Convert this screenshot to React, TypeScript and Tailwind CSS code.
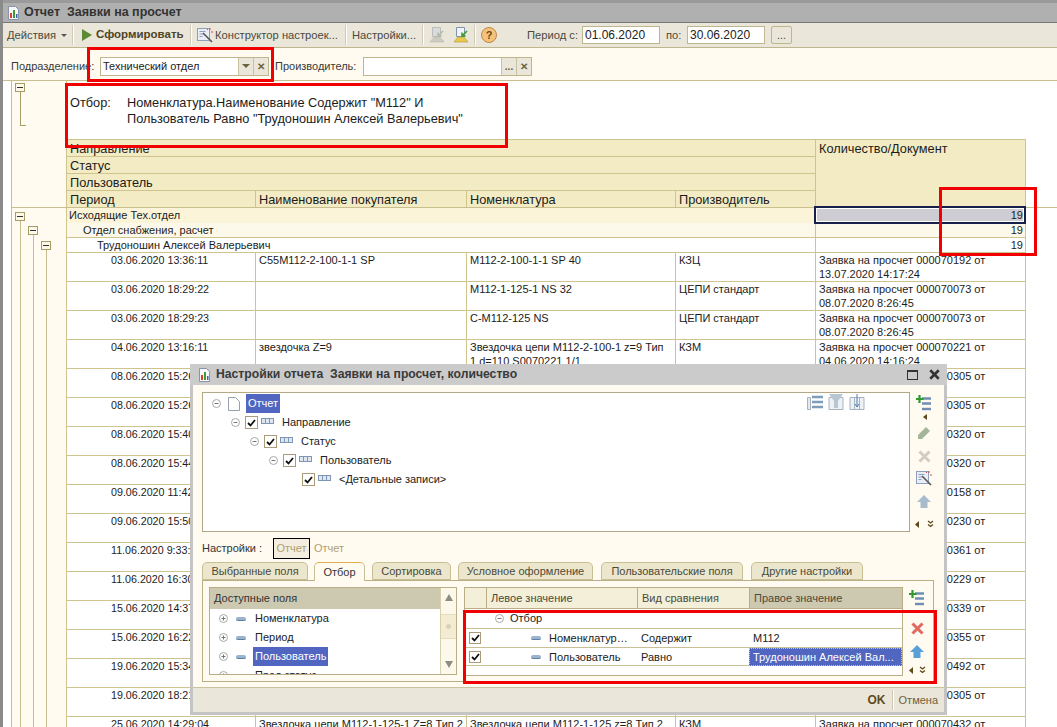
import { FC, ReactNode } from "react";

const rows: string[][] = [
  ["03.06.2020 13:36:11", "С55М112-2-100-1-1 SP", "М112-2-100-1-1 SP 40", "КЗЦ", "Заявка на просчет 000070192 от 13.07.2020 14:17:24"],
  ["03.06.2020 18:29:22", "", "М112-1-125-1 NS 32", "ЦЕПИ стандарт", "Заявка на просчет 000070073 от 08.07.2020 8:26:45"],
  ["03.06.2020 18:29:23", "", "С-М112-125 NS", "ЦЕПИ стандарт", "Заявка на просчет 000070073 от 08.07.2020 8:26:45"],
  ["04.06.2020 13:16:11", "звездочка Z=9", "Звездочка цепи М112-2-100-1 z=9 Тип 1 d=110 S0070221 1/1", "КЗМ", "Заявка на просчет 000070221 от 04.06.2020 14:16:24"],
  ["08.06.2020 15:26:10", "", "", "", "Заявка на просчет 000070305 от"],
  ["08.06.2020 15:26:44", "", "", "", "Заявка на просчет 000070305 от"],
  ["08.06.2020 15:40:12", "", "", "", "Заявка на просчет 000070320 от"],
  ["08.06.2020 15:44:31", "", "", "", "Заявка на просчет 000070320 от"],
  ["09.06.2020 11:42:05", "", "", "", "Заявка на просчет 000070158 от"],
  ["09.06.2020 15:50:18", "", "", "", "Заявка на просчет 000070230 от"],
  ["11.06.2020 9:33:27", "", "", "", "Заявка на просчет 000070361 от"],
  ["11.06.2020 16:30:41", "", "", "", "Заявка на просчет 000070229 от"],
  ["15.06.2020 14:37:09", "", "", "", "Заявка на просчет 000070339 от"],
  ["15.06.2020 16:22:50", "", "", "", "Заявка на просчет 000070355 от"],
  ["19.06.2020 15:34:16", "", "", "", "Заявка на просчет 000070492 от"],
  ["19.06.2020 18:21:38", "", "", "", "Заявка на просчет 000070305 от"],
  ["25.06.2020 14:29:04", "Звездочка цепи М112-1-125-1 Z=8 Тип 2", "Звездочка цепи М112-1-125 z=8 Тип 2", "КЗМ", "Заявка на просчет 000070432 от"],
];

const ReportIcon: FC = () => (
  <svg width="13" height="14" viewBox="0 0 13 14" className="shrink-0">
    <path d="M1.5 .5h7l3 3v10h-10z" fill="#f7f7fa" stroke="#8b93a8" />
    <rect x="3" y="7" width="2" height="5" fill="#d8402a" />
    <rect x="6" y="4" width="2" height="8" fill="#3f9a3a" />
    <rect x="9" y="8" width="1.5" height="4" fill="#3b62b5" />
  </svg>
);

const PlayIcon: FC = () => (
  <svg width="10" height="12" viewBox="0 0 10 12" className="shrink-0">
    <path d="M0 0l10 6-10 6z" fill="#5d8a35" />
  </svg>
);

const WandIcon: FC = () => (
  <svg width="16" height="16" viewBox="0 0 16 16" className="shrink-0">
    <rect x=".5" y="1.5" width="12" height="12" fill="#e8edf6" stroke="#8fa0bd" />
    <path d="M2.500 4.500h6M2.500 7h4M2.500 9.500h3" stroke="#8fa0bd" />
    <path d="M6 6l9 9" stroke="#555" strokeWidth="1.6" />
    <path d="M10 2l1 1M13 1v2M14 5h2" stroke="#d64a4a" />
  </svg>
);

const SaveIcon: FC<{ muted?: boolean }> = ({ muted }) => (
  <svg width="16" height="16" viewBox="0 0 16 16" className="shrink-0" opacity={muted ? 0.55 : 1}>
    <path d="M3.500 .5h8v9h-8z" fill={muted ? "#cfd3d6" : "#f0f3f7"} stroke={muted ? "#8f9aa3" : "#7f93ad"} />
    <path d="M1 15l4-5h6l4 5z" fill={muted ? "#b6b6ae" : "#e8c94e"} stroke={muted ? "#96968c" : "#b0953a"} strokeWidth=".6" />
    <path d="M14 4l-5 5M9 5.500V9h3.500" stroke={muted ? "#7f9c88" : "#3f9a3a"} strokeWidth="1.6" fill="none" />
  </svg>
);

const HelpIcon: FC = () => (
  <div className="flex h-[16px] w-[16px] shrink-0 items-center justify-center rounded-full border border-[#b98a45] bg-[#f4c27c] text-[11px] font-bold leading-none text-[#6d4a18]">
    ?
  </div>
);

const ToggleBox: FC = () => (
  <div className="flex h-[9px] w-[10px] shrink-0 items-center justify-center border border-[#a89c66] bg-[#fdf9ea]">
    <div className="h-px w-[6px] bg-[#333]" />
  </div>
);

const Circle: FC<{ plus?: boolean }> = ({ plus }) => (
  <svg width="9" height="9" viewBox="0 0 9 9" className="shrink-0">
    <circle cx="4.5" cy="4.5" r="4" fill="#fff" stroke="#a8a8a8" />
    <path d={plus ? "M2.500 4.500h4M4.500 2.500v4" : "M2.500 4.500h4"} stroke="#777" />
  </svg>
);

const Check: FC<{ small?: boolean }> = ({ small }) => (
  <div className={`flex shrink-0 items-center justify-center border border-[#a89d78] bg-white ${small ? "h-[12px] w-[12px]" : "h-[13px] w-[13px]"}`}>
    <svg width="9" height="8" viewBox="0 0 9 8">
      <path d="M1 4l2.500 2.500L8 1" stroke="#111" strokeWidth="1.8" fill="none" />
    </svg>
  </div>
);

const GroupIcon: FC = () => (
  <svg width="13" height="6" viewBox="0 0 13 6" className="shrink-0">
    <rect x=".5" y=".5" width="12" height="5" fill="#dfe6ef" stroke="#7f97b5" />
    <path d="M4.500 .5v5M8.500 .5v5" stroke="#7f97b5" />
  </svg>
);

const FieldIcon: FC = () => <div className="h-[4px] w-[10px] shrink-0 rounded-[2px] border-b border-[#5c7fa5] bg-[#9ab4d0]" />;

const AddIcon: FC = () => (
  <svg width="16" height="16" viewBox="0 0 16 16">
    <path d="M6 3.500h9M6 8.500h9" stroke="#6d8fb3" strokeWidth="2.400" />
    <path d="M6 14h9" stroke="#6d8fb3" strokeWidth="2.400" />
    <path d="M3.500 0v8M0 4h7.500" stroke="#2f9a2f" strokeWidth="2.200" />
  </svg>
);

const PencilIcon: FC = () => (
  <svg width="13" height="13" viewBox="0 0 13 13">
    <path d="M0 13V9l8-8 4 4-8 8z" fill="#a3b59b" />
  </svg>
);

const CrossIcon: FC<{ color: string; size?: number }> = ({ color, size = 13 }) => (
  <svg width={size} height={size} viewBox="0 0 13 13">
    <path d="M1.500 1.500l10 10M11.500 1.500l-10 10" stroke={color} strokeWidth="3" />
  </svg>
);

const UpIcon: FC<{ color: string }> = ({ color }) => (
  <svg width="14" height="13" viewBox="0 0 14 13">
    <path d="M7 0l7 7h-3.500v6h-7V7H0z" fill={color} />
  </svg>
);

const MoveArrows: FC<{ gap: string }> = ({ gap }) => (
  <div className={`flex items-center ${gap}`}>
    <svg width="4" height="7" viewBox="0 0 4 7">
      <path d="M4 0v7L0 3.500z" fill="#5d4a1a" />
    </svg>
    <svg width="7" height="8" viewBox="0 0 7 8">
      <path d="M1 1l2.500 2L6 1M1 4.500l2.500 2 2.500-2" stroke="#5d4a1a" strokeWidth="1.3" fill="none" />
    </svg>
  </div>
);

const Sep: FC<{ className?: string }> = ({ className }) => (
  <div className={`h-[20px] w-[2px] shrink-0 border-x border-l-[#cfc9b8] border-r-white ${className ?? ""}`} />
);

const Toolbar: FC = () => (
  <div className="flex h-[25px] items-center whitespace-nowrap border-b border-[#bdb68f] bg-[#ebe6da] text-[11.2px] text-[#4a4a3a]">
    <span className="ml-[4px] w-[50px]">Действия</span>
    <span className="ml-[4px] border-x-[3px] border-t-[3px] border-x-transparent border-t-[#555]" />
    <Sep className="ml-[5px]" />
    <div className="ml-[8px]"><PlayIcon /></div>
    <span className="ml-[4px] w-[88px] text-[11.5px] font-bold text-[#4f4526]">Сформировать</span>
    <Sep className="ml-[6px]" />
    <div className="ml-[5px]"><WandIcon /></div>
    <span className="ml-[2px] w-[123px]">Конструктор настроек...</span>
    <Sep className="ml-[7px]" />
    <span className="ml-[5px] w-[64px]">Настройки...</span>
    <Sep className="ml-[6px]" />
    <div className="ml-[5px]"><SaveIcon muted /></div>
    <div className="ml-[8px]"><SaveIcon /></div>
    <Sep className="ml-[5px]" />
    <div className="ml-[5px]"><HelpIcon /></div>
    <span className="ml-[30px] w-[50px]">Период с:</span>
    <div className="ml-[5px] flex h-[18px] w-[78px] items-center border border-[#bdb68f] bg-white pl-[2px] text-[12px] text-[#222]">01.06.2020</div>
    <span className="ml-[6px] w-[16px]">по:</span>
    <div className="ml-[5px] flex h-[18px] w-[78px] items-center border border-[#bdb68f] bg-white pl-[2px] text-[12px] text-[#222]">30.06.2020</div>
    <div className="ml-[6px] flex h-[18px] w-[21px] items-center justify-center rounded-[2px] border border-[#bdb68f] text-[11px]">...</div>
  </div>
);

const InputButton: FC<{ children: ReactNode }> = ({ children }) => (
  <div className="flex h-full w-[15px] items-center justify-center border-l border-[#c9c2a0] bg-[#ebe6da] text-[10px] font-bold text-[#6d6240]">
    {children}
  </div>
);

const FilterBar: FC = () => (
  <div className="flex h-[33px] items-center border-b border-[#c9bf8e] bg-[#fffbf0] pt-[4px] text-[11px] text-[#3a3a3a]">
    <span className="ml-[8px] w-[89px]">Подразделение:</span>
    <div className="flex h-[19px] w-[169px] items-center border border-[#bdb68f] bg-white">
      <span className="flex-1 pl-[2px] text-[#222]">Технический отдел</span>
      <InputButton>
        <span className="border-x-[4px] border-t-[4px] border-x-transparent border-t-[#6d6240]" />
      </InputButton>
      <InputButton>✕</InputButton>
    </div>
    <span className="ml-[6px] w-[88px]">Производитель:</span>
    <div className="flex h-[19px] w-[169px] items-center border border-[#bdb68f] bg-white">
      <span className="flex-1" />
      <InputButton>...</InputButton>
      <InputButton>✕</InputButton>
    </div>
  </div>
);

const HeaderCell: FC<{ children: ReactNode; className?: string }> = ({ children, className }) => (
  <div className={`overflow-hidden border-l border-t border-[#cfc48d] bg-[#f3ebc3] px-[3px] text-[12.75px] leading-[18px] text-[#1c1c1c] ${className ?? ""}`}>
    {children}
  </div>
);

const ReportHeader: FC = () => (
  <div className="ml-[8px] flex h-[127px] border-b border-[#c9bf8e]">
    <div className="w-[55px] border-l border-[#c9bf8e] bg-[#fffbf0] pl-[3px] pt-[2px]">
      <ToggleBox />
      <div className="ml-[5px] h-[34px] w-[6px] border-b border-l border-[#a89c66]" />
    </div>
    <div className="flex flex-col">
      <div className="flex h-[58px] border-l border-[#c9bf8e] bg-white pl-[3px] pt-[14px] text-[12.75px] leading-[16px] text-[#1c1c1c]">
        <span className="w-[57px]">Отбор:</span>
        <div>
          <div>Номенклатура.Наименование Содержит "М112" И</div>
          <div>Пользователь Равно "Трудоношин Алексей Валерьевич"</div>
        </div>
      </div>
      <div className="grid grid-cols-[189px_211px_209px_140px_211px] grid-rows-[17px_17px_17px_17px]">
        <HeaderCell className="col-span-4">Направление</HeaderCell>
        <HeaderCell className="row-span-4 col-start-5 row-start-1 border-r">Количество/Документ</HeaderCell>
        <HeaderCell className="col-span-4">Статус</HeaderCell>
        <HeaderCell className="col-span-4">Пользователь</HeaderCell>
        <HeaderCell>Период</HeaderCell>
        <HeaderCell>Наименование покупателя</HeaderCell>
        <HeaderCell>Номенклатура</HeaderCell>
        <HeaderCell>Производитель</HeaderCell>
      </div>
    </div>
  </div>
);

const GroupRow: FC<{ label: string; pad: string; bg: string; selected?: boolean }> = ({ label, pad, bg, selected }) => (
  <div className="grid h-[15px] grid-cols-[749px_211px] border-b border-[#cfc48d] text-[11px] leading-[14px] text-[#1c1c1c]">
    <div className={`border-l border-[#cfc48d] ${pad} ${bg}`}>{label}</div>
    {selected ? (
      <div className="relative -ml-px -mt-[2px] h-[18px] w-[212px] border-2 border-[#16204a] bg-[#cdcdd3] pr-[1px] text-right leading-[14px] outline outline-offset-[-3px] outline-white">19</div>
    ) : (
      <div className={`border-x border-[#cfc48d] pr-[2px] text-right ${bg}`}>19</div>
    )}
  </div>
);

const DetailRow: FC<{ row: string[] }> = ({ row }) => (
  <div className="grid h-[29px] grid-cols-[189px_211px_209px_140px_211px] border-b border-[#cfc48d] bg-white text-[11px] leading-[14px] text-[#1c1c1c]">
    <div className="overflow-hidden border-l border-[#cfc48d] pl-[44px] text-[10.7px]">{row[0]}</div>
    {row.slice(1).map((cell, i) => (
      <div key={i} className={`overflow-hidden border-l border-[#cfc48d] px-[3px] ${i === 3 ? "border-r" : ""}`}>
        {cell}
      </div>
    ))}
  </div>
);

const GutterColumn: FC<{ top: string }> = ({ top }) => (
  <div className={`flex w-[13px] flex-col ${top}`}>
    <ToggleBox />
    <div className="ml-[5px] flex-1 border-l border-[#c9bf8e]" />
  </div>
);

const ReportBody: FC = () => (
  <div className="ml-[8px] flex">
    <div className="flex w-[55px] shrink-0 border-l border-[#c9bf8e] bg-[#fffbf0] pl-[3px]">
      <GutterColumn top="pt-[4px]" />
      <GutterColumn top="pt-[18px]" />
      <GutterColumn top="pt-[33px]" />
    </div>
    <div>
      <GroupRow label="Исходящие Тех.отдел" pad="pl-[2px]" bg="bg-[#fbf4d9]" selected />
      <GroupRow label="Отдел снабжения, расчет" pad="pl-[16px]" bg="bg-[#fdf9ea]" />
      <GroupRow label="Трудоношин Алексей Валерьевич" pad="pl-[30px]" bg="bg-white" />
      {rows.map((row) => (
        <DetailRow key={row[0]} row={row} />
      ))}
    </div>
  </div>
);

const TreeRow: FC<{ pad: string; circle?: boolean; label: string }> = ({ pad, circle, label }) => (
  <div className={`flex h-[19px] items-center ${pad}`}>
    {circle && <div className="mr-[5px]"><Circle /></div>}
    <Check />
    <div className="mb-[3px] ml-[3px]"><GroupIcon /></div>
    <span className="ml-[8px]">{label}</span>
  </div>
);

const Tab: FC<{ label: string; w: string; ml?: string; active?: boolean }> = ({ label, w, ml, active }) => (
  <div
    className={`-mb-px flex items-center justify-center rounded-t-[5px] border border-[#c9bf95] ${w} ${ml ?? ""} ${
      active ? "z-10 h-[19px] border-b-0 border-t-[#e0b050] bg-[#fffbf0] text-[#333]" : "h-[18px] bg-[#ece6cd] text-[#4a4a3a]"
    }`}
  >
    {label}
  </div>
);

const FieldRow: FC<{ label: string; selected?: boolean }> = ({ label, selected }) => (
  <div className="flex h-[19px] shrink-0 items-center pl-[9px]">
    <Circle plus />
    <div className="ml-[8px]"><FieldIcon /></div>
    <span className={`ml-[7px] px-[2px] leading-[19px] ${selected ? "bg-[#5166c0] text-white" : ""}`}>{label}</span>
  </div>
);

const FilterTable: FC = () => (
  <div className="h-[89px] w-[439px] border border-[#b9ae85] bg-white">
    <div className="grid h-[21px] grid-cols-[21px_151px_112px_1fr] border-b border-[#b9ae85] bg-[#f3efd8] leading-[20px] text-[#4a4a3a]">
      <div />
      <div className="border-l border-[#b9ae85] pl-[4px]">Левое значение</div>
      <div className="border-l border-[#b9ae85] pl-[4px]">Вид сравнения</div>
      <div className="border-l border-[#b9ae85] bg-[#cdc8b0] pl-[4px]">Правое значение</div>
    </div>
    <div className="flex h-[20px] items-center border-b border-[#c9bf95] pl-[30px]">
      <Circle />
      <span className="ml-[6px]">Отбор</span>
    </div>
    <div className="grid h-[19px] grid-cols-[21px_151px_112px_1fr] items-center border-b border-[#c9bf95]">
      <div className="pl-[4px]"><Check small /></div>
      <div className="flex items-center pl-[45px]">
        <FieldIcon />
        <span className="ml-[8px] w-[80px] truncate">Номенклатура.Наименование</span>
      </div>
      <div className="pl-[4px]">Содержит</div>
      <div className="pl-[4px]">М112</div>
    </div>
    <div className="grid h-[18px] grid-cols-[21px_151px_112px_1fr] items-center border-b border-[#c9bf95]">
      <div className="pl-[4px]"><Check small /></div>
      <div className="flex items-center pl-[45px]">
        <FieldIcon />
        <span className="ml-[8px]">Пользователь</span>
      </div>
      <div className="pl-[4px]">Равно</div>
      <div className="h-[18px] truncate border border-dotted border-[#d8c878] bg-[#5166c0] pl-[3px] leading-[16px] text-white">Трудоношин Алексей Вал...</div>
    </div>
  </div>
);

const SettingsModal: FC = () => (
  <div className="absolute left-[187px] top-[364px] flex h-[351px] w-[757px] flex-col border-x-[3px] border-b-[3px] border-[#c4c4c4] bg-[#fffbf0] text-[11px] text-[#222]">
    <div className="-mx-[3px] flex h-[21px] shrink-0 items-center bg-[#cbcbcb] pl-[8px] text-[12.2px] font-bold text-[#3a3a3a]">
      <ReportIcon />
      <span className="ml-[5px]">Настройки отчета&nbsp; Заявки на просчет, количество</span>
      <div className="ml-auto mr-[11px] h-[10px] w-[11px] border border-t-2 border-[#333]" />
      <div className="mr-[7px]"><CrossIcon color="#333" size={11} /></div>
    </div>
    <div className="flex pl-[9px] pt-[7px]">
      <div className="relative h-[140px] w-[708px] border border-[#b0a886] bg-white pl-[9px] pt-px">
        <div className="flex h-[19px] items-center">
          <Circle />
          <svg width="14" height="14" viewBox="0 0 14 14" className="ml-[6px]">
            <path d="M1.500.5h7l4 4v9h-11z" fill="#fff" stroke="#97a0ad" />
          </svg>
          <span className="ml-[5px] bg-[#5166c0] px-[2px] leading-[19px] text-white">Отчет</span>
        </div>
        <TreeRow pad="pl-[19px]" circle label="Направление" />
        <TreeRow pad="pl-[38px]" circle label="Статус" />
        <TreeRow pad="pl-[57px]" circle label="Пользователь" />
        <TreeRow pad="pl-[90px]" label="<Детальные записи>" />
        <div className="absolute right-[44px] top-px flex gap-[5px]">
          <svg width="16" height="16" viewBox="0 0 16 16"><path d="M.5 3.500h3v12h-3z" fill="#e4e9ef" stroke="#a5b3c3" /><path d="M5 3h11M5 8h11M5 13h11" stroke="#7f9cba" strokeWidth="2.400" /></svg>
          <svg width="16" height="16" viewBox="0 0 16 16"><path d="M1 3.500h14v12H1z" fill="#eef1f4" stroke="#a5b3c3" /><path d="M1 0h14l-5 7v7H6V7z" fill="#b8c6d3" /></svg>
          <svg width="16" height="16" viewBox="0 0 16 16"><path d="M1 3.500h14v12H1zM5.500 3.500v12M10.500 3.500v12" fill="#eef1f4" stroke="#a5b3c3" /><path d="M8 0v13M6 10l2 3 2-3" stroke="#4f7fb5" fill="none" /></svg>
        </div>
      </div>
      <div className="ml-px flex w-[26px] flex-col items-center pt-[3px]">
        <AddIcon />
        <svg width="4" height="6" viewBox="0 0 4 6" className="ml-[2px] mt-[3px]"><path d="M4 0v6L0 3z" fill="#5d4a1a" /></svg>
        <div className="mt-[6px]"><PencilIcon /></div>
        <div className="mt-[11px]"><CrossIcon color="#d3ccc4" /></div>
        <div className="mt-[7px]"><WandIcon /></div>
        <div className="mt-[9px]"><UpIcon color="#a9bccb" /></div>
        <div className="mt-[12px]"><MoveArrows gap="gap-[8px]" /></div>
      </div>
    </div>
    <div className="ml-[9px] mt-[6px] flex h-[21px] items-center">
      <span className="w-[71px] text-[#333]">Настройки :</span>
      <div className="flex h-[21px] w-[37px] items-center justify-center border border-black bg-[#f3eee0] text-[#b0a070]">Отчет</div>
      <span className="ml-[4px] text-[#b0a070]">Отчет</span>
    </div>
    <div className="ml-[9px] mt-[3px] flex h-[18px] items-start">
      <Tab label="Выбранные поля" w="w-[106px]" />
      <Tab label="Отбор" w="w-[51px]" ml="ml-[6px]" active />
      <Tab label="Сортировка" w="w-[79px]" ml="ml-[7px]" />
      <Tab label="Условное оформление" w="w-[135px]" ml="ml-[7px]" />
      <Tab label="Пользовательские поля" w="w-[142px]" ml="ml-[8px]" />
      <Tab label="Другие настройки" w="w-[112px]" ml="ml-[8px]" />
    </div>
    <div className="ml-[9px] flex h-[102px] w-[732px] border border-[#b9ae85] pl-[6px] pt-[6px]">
      <div className="flex h-[88px] w-[248px] border border-[#b9ae85] bg-white">
        <div className="flex w-[231px] flex-col overflow-hidden">
          <div className="h-[21px] shrink-0 bg-[#cdc8b0] pl-[4px] leading-[20px] text-[#333]">Доступные поля</div>
          <FieldRow label="Номенклатура" />
          <FieldRow label="Период" />
          <FieldRow label="Пользователь" selected />
          <FieldRow label="Пред статус" />
        </div>
        <div className="flex w-[16px] flex-col items-center border-l border-[#d8d0aa] bg-[#fdf9ea]">
          <div className="mb-[4px] mt-[6px] border-x-[4px] border-b-[7px] border-x-transparent border-b-[#8d8d82]" />
          <div className="mt-[9px] flex h-[25px] w-full items-center justify-center border-y border-[#e3dcc0] bg-[#f3ecd2]">
            <div className="h-[5px] w-[5px] rounded-full bg-[#d8d2b8]" />
          </div>
          <div className="mb-[6px] mt-auto border-x-[4px] border-t-[7px] border-x-transparent border-t-[#8d8d82]" />
        </div>
      </div>
      <div className="ml-[7px]"><FilterTable /></div>
      <div className="ml-[5px] flex w-[18px] flex-col items-center pt-[3px]">
        <AddIcon />
        <div className="mt-[16px]"><CrossIcon color="#e06a60" /></div>
        <div className="mt-[10px]"><UpIcon color="#5aa0d8" /></div>
        <div className="mt-[8px]"><MoveArrows gap="gap-[6px]" /></div>
      </div>
    </div>
    <div className="mt-[5px] flex h-[25px] flex-1 items-center justify-end border-t border-[#c9c2a0] bg-[#ebe6da] pr-[6px]">
      <span className="text-[12px] font-bold text-[#5f4a1e]">OK</span>
      <Sep className="ml-[6px]" />
      <span className="ml-[5px] text-[#6d6240]">Отмена</span>
    </div>
  </div>
);

const RedBox: FC<{ className: string }> = ({ className }) => (
  <div className={`pointer-events-none absolute border-[3px] border-[#f00000] ${className}`} />
);

export default function App() {
  return (
    <div className="relative h-[727px] w-[1057px] overflow-hidden border-l-[3px] border-[#8a8a8a] bg-white font-['Liberation_Sans',Arial,sans-serif]">
      <div className="flex h-[23px] items-center border-b border-t-[3px] border-b-[#77777b] border-t-[#9a9a9a] bg-[#b0b0b0] pl-[4px] text-[12.5px] font-bold text-[#333]">
        <ReportIcon />
        <span className="ml-[4px]">Отчет&nbsp; Заявки на просчет</span>
      </div>
      <Toolbar />
      <FilterBar />
      <ReportHeader />
      <ReportBody />
      <SettingsModal />
      <RedBox className="left-[84px] top-[47px] h-[35px] w-[187px]" />
      <RedBox className="left-[62px] top-[83px] h-[65px] w-[443px]" />
      <RedBox className="left-[936px] top-[187px] h-[69px] w-[98px]" />
      <RedBox className="left-[460px] top-[610px] h-[74px] w-[474px]" />
    </div>
  );
}
